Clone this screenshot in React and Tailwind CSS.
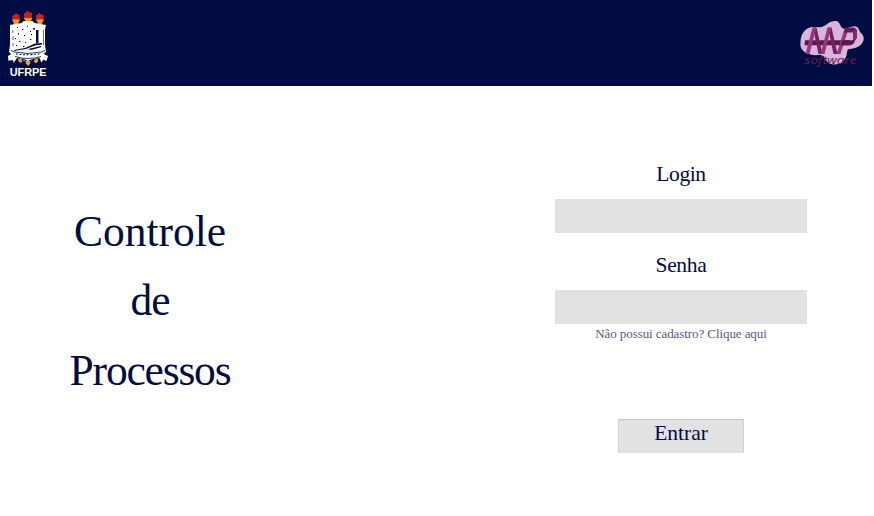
import React from "react";

function CrestLogo() {
  return (
    <svg className="h-[86px] w-[56px]" viewBox="0 0 56 86" role="img" aria-label="UFRPE">
      <g fill="#c9241c">
        <path d="M12.3 20l.2-4.5 2.4-.8 1-2.2 1.2 1.8 2.6.6-.3 5.1z" />
        <path d="M24.2 18.3l-.3-5 2.2-.8 1.5-2.5 1 2 3.4.7-.2 5.6z" />
        <path d="M36.3 20l-.3-4.7 2.4-.8 1.2-2 1 1.8 3 .8-.4 4.9z" />
      </g>
      <g fill="#f09a2b">
        <path d="M11.8 19.5h8.4l-1.5 2.5-.5 2h-4.4l-.5-2z" />
        <path d="M23.8 18h8.7l-1.8 3.5h-5z" />
        <path d="M35.8 19.5h8.4l-1.7 2.5-.5 2h-4l-.5-2z" />
      </g>
      <path d="M10 25l5-1 7-1 1.5-2h9l2 2 6 1 5.5 1-1 4v16l1 7-5 4-6 2-4 3-3 1-4-1-4-3-7-2-4-4 1-7V29z" fill="#fff" />
      <path d="M12.8 30v3m.2 3v4m0 3v3M43.5 30v15" stroke="#000c42" strokeWidth=".6" />
      <path d="M17 27h1v1h-1zM22 29h1.3v1H22zM27 26h1v1h-1zM18 33h1v1.5h-1zM24 35h1.3v1H24zM30 31h1v1h-1zM15 38h1v1h-1zM19 41h1.4v1H19zM25 42h1v1h-1zM30 39h1.3v1H30zM16 45h1v1h-1zM23 46h1.4v1H23zM33 28h2v1.5h-2zM31 34h1v1h-1z" fill="#000c42" />
      <path d="M36 30h2.4v13H36zM14 50l11-2 10-4.5 7-.5v1.5l-7 1-9 3.5-12 2zM28 49l13-3v1.3L31 50z" fill="#000c42" />
      <path d="M8 56l3.5-2-.8-3.2 5 .7q12 3 24 0l5-.7-.8 3.2L48 56l-1.5 5-3.3-1.3-1.7 3-2.2-5q-11 3-22 0l-3.7 5-.7-2.8-4.5.8z" fill="#fff" />
      <path d="M11 50.5l3.5 1.5q13 3 27 0l3.5-1.5M15 56.5q13 4 26 0" fill="none" stroke="#000c42" strokeWidth=".8" />
      <path d="M16 54h2m1.5.5h2m1.5.3h2m1.5 0h2m2-.2h2m1.5-.3h2m1.5-.3h2" fill="none" stroke="#000c42" strokeWidth="1.1" />
      <path d="M22 59l4 1.5 2 2 2-2 5-1.5" fill="none" stroke="#000c42" strokeWidth="1.2" />
      <g fill="#e5a23c">
        <path d="M18 58.5l3 .5 1.5 2-1.5 2-2.5-1.5z" />
        <path d="M26 61h4l.5 2.5-2.3 2.2-2.5-2z" />
        <path d="M34.5 59.5l3.5-1v3l-2.2 2-1.8-1.7z" />
      </g>
      <text x="9.7" y="76.2" textLength="36.8" lengthAdjust="spacingAndGlyphs" fill="#fff" fontSize="11" fontWeight="700" className="font-['Liberation_Sans',sans-serif]">UFRPE</text>
    </svg>
  );
}

function SoftwareLogo() {
  return (
    <svg className="h-[50px] w-[70px]" viewBox="796 18 70 50" role="img" aria-label="AAP software">
      <path d="M836 21c4 0 4 6 7 7.5 4 1 8-3.5 13-2 3 1 3 4 4.5 6 2 2 4 4 3 8-2 6-8 8-14 8.5-3 .5-2 3-3 6.5-2 6-6 9-12 9-7 0-8-4-11-8-3-3-8 0-13-2-7-2-11-6-10-12 0-7 3-12 8-14.5 5-2 9 0 13-1 4-1 5-3 8-4.5 2-1 4-1.5 6.5-1.5z" fill="#d9b5da" />
      <path d="M805 40.3h44v5h-44.5z" fill="#5c174e" />
      <path d="M813 27.5h3.5L822.5 54h-4zM828 27.5h3.5L837.5 54h-4z" fill="#702160" />
      <path d="M812.5 27.5h3.800L809.500 54h-4zM827.5 27.5h3.8L824.5 54h-4zM844.5 29h4L840.5 54h-4z" fill="#93377f" />
      <path d="M846 27.5h8.5l2.500 3-2 2H844l.8-3.5z" fill="#651b57" />
      <path d="M853 31l4-1.5v8.5l-4 4.5z" fill="#7d2b6d" />
      <path d="M842 40.3h12l2-2-2 5-3 2h-10z" fill="#5c174e" />
      <text x="804.5" y="63.7" textLength="52" lengthAdjust="spacingAndGlyphs" fontSize="10" fontStyle="italic" fill="#651b57" className="font-['Noto_Sans',sans-serif]">software</text>
    </svg>
  );
}

function Field({ id, label, type, className }) {
  return (
    <div className={className}>
      <label htmlFor={id} className="block h-[34px] text-center leading-[18px]">{label}</label>
      <input id={id} type={type} className="block h-[34px] w-full bg-[#e2e2e2] px-3 text-base outline-none" />
    </div>
  );
}

export default function App() {
  return (
    <div className="h-[516px] w-[874px] overflow-hidden bg-white font-['Liberation_Serif',serif] text-[#000c42]">
      <header className="flex h-[86px] w-[872px] items-center justify-between bg-[#000c42] pr-1.5">
        <CrestLogo />
        <SoftwareLogo />
      </header>
      <main className="flex justify-between pr-[67px] pl-[50px]">
        <h1 className="w-[200px] pt-[111px] text-center text-[43.5px] leading-[69.3px]">
          <span className="block">Controle</span>
          <span className="block tracking-[-1px]">de</span>
          <span className="block tracking-[-1.2px]">Processos</span>
        </h1>
        <form className="flex w-[252px] flex-col pt-[79px] text-[21.5px]" onSubmit={(e) => e.preventDefault()}>
          <Field id="login" label="Login" type="text" className="tracking-[-0.4px]" />
          <Field id="senha" label="Senha" type="password" className="mt-[23.4px] tracking-[-0.3px]" />
          <a href="#" className="mt-[0.6px] text-center text-[13px] leading-[18px] tracking-[-0.08px] text-[#555b80]">Não possui cadastro? Clique aqui</a>
          <button className="mt-[76px] h-[34px] w-[126px] self-center border-x border-t border-x-[#d3d3d3] border-t-[#c8c8c8] bg-[#e2e2e2] pb-[6px] leading-6">Entrar</button>
        </form>
      </main>
    </div>
  );
}
